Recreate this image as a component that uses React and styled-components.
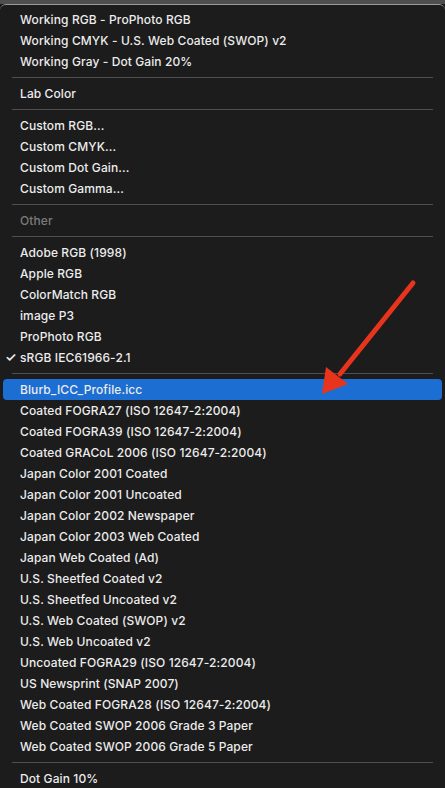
import React from "react";
import styled, { createGlobalStyle } from "styled-components";

const GlobalStyle = createGlobalStyle`
  html, body {
    margin: 0;
    padding: 0;
    background: #161616;
    overflow: hidden;
  }
`;

const Page = styled.div`
  position: relative;
  width: 445px;
  height: 788px;
  display: flex;
  flex-direction: column;
  background: #161616;
  overflow: hidden;
`;

const TopStrip = styled.div`
  height: 4px;
  background: #4e4e4e;
  flex-shrink: 0;
`;

const Menu = styled.div`
  flex: 1;
  display: flex;
  flex-direction: column;
  padding: 3.5px 3px 0;
  background: #1c1c1c;
  border-top: 1px solid #9a9a9a;
  border-radius: 6px 6px 0 0;
  font-family: Inter, "Liberation Sans", sans-serif;
  font-size: 12px;
  font-weight: 500;
  letter-spacing: 0.1px;
`;

const Row = styled.div`
  height: 21px;
  flex-shrink: 0;
  display: flex;
  align-items: center;
  border-radius: 4px;
  color: ${(p) => (p.disabled ? "#7b7b7b" : "#ececec")};
  background: ${(p) => (p.active ? "#1c6ed2" : "transparent")};
  white-space: nowrap;
`;

const Gutter = styled.span`
  width: 17px;
  flex-shrink: 0;
  padding-left: 2px;
  box-sizing: border-box;
  font-size: 13px;
  font-weight: 600;
  color: #ececec;
`;

const Separator = styled.div`
  height: 1px;
  flex-shrink: 0;
  margin: 5px 9px;
  background: #4f4f4f;
`;

const Arrow = styled.svg`
  position: absolute;
  left: 0;
  top: 0;
  pointer-events: none;
`;

const groups = [
  [{ label: "Working RGB - ProPhoto RGB" }, { label: "Working CMYK - U.S. Web Coated (SWOP) v2" }, { label: "Working Gray - Dot Gain 20%" }],
  [{ label: "Lab Color" }],
  [{ label: "Custom RGB..." }, { label: "Custom CMYK..." }, { label: "Custom Dot Gain..." }, { label: "Custom Gamma..." }],
  [{ label: "Other", disabled: true }],
  [
    { label: "Adobe RGB (1998)" },
    { label: "Apple RGB" },
    { label: "ColorMatch RGB" },
    { label: "image P3" },
    { label: "ProPhoto RGB" },
    { label: "sRGB IEC61966-2.1", checked: true },
  ],
  [
    { label: "Blurb_ICC_Profile.icc", active: true },
    { label: "Coated FOGRA27 (ISO 12647-2:2004)" },
    { label: "Coated FOGRA39 (ISO 12647-2:2004)" },
    { label: "Coated GRACoL 2006 (ISO 12647-2:2004)" },
    { label: "Japan Color 2001 Coated" },
    { label: "Japan Color 2001 Uncoated" },
    { label: "Japan Color 2002 Newspaper" },
    { label: "Japan Color 2003 Web Coated" },
    { label: "Japan Web Coated (Ad)" },
    { label: "U.S. Sheetfed Coated v2" },
    { label: "U.S. Sheetfed Uncoated v2" },
    { label: "U.S. Web Coated (SWOP) v2" },
    { label: "U.S. Web Uncoated v2" },
    { label: "Uncoated FOGRA29 (ISO 12647-2:2004)" },
    { label: "US Newsprint (SNAP 2007)" },
    { label: "Web Coated FOGRA28 (ISO 12647-2:2004)" },
    { label: "Web Coated SWOP 2006 Grade 3 Paper" },
    { label: "Web Coated SWOP 2006 Grade 5 Paper" },
  ],
  [{ label: "Dot Gain 10%" }],
];

const App = () => (
  <Page>
    <GlobalStyle />
    <TopStrip />
    <Menu>
      {groups.map((group, gi) => (
        <React.Fragment key={gi}>
          {gi > 0 && <Separator />}
          {group.map((item) => (
            <Row key={item.label} active={item.active} disabled={item.disabled}>
              <Gutter>{item.checked ? "✓" : ""}</Gutter>
              {item.label}
            </Row>
          ))}
        </React.Fragment>
      ))}
    </Menu>
    <Arrow width="445" height="788" viewBox="0 0 445 788">
      <line x1="413" y1="283" x2="340" y2="374" stroke="#e8341c" strokeWidth="5" strokeLinecap="round" />
      <polygon points="322,394 326,367 348,384" fill="#e8341c" />
    </Arrow>
  </Page>
);

export default App;
